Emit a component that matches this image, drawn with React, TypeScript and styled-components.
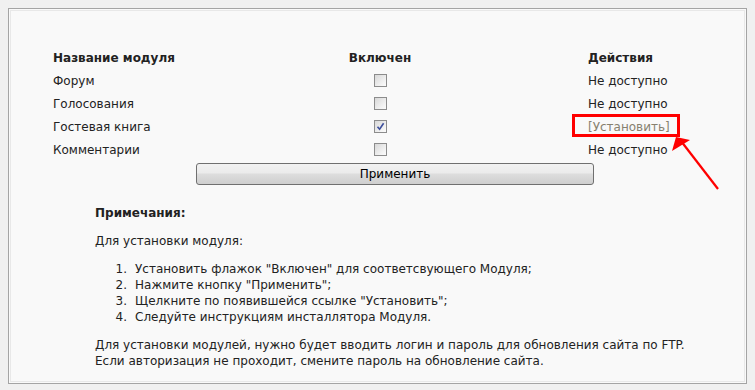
import React from "react";
import styled, { createGlobalStyle } from "styled-components";

const Global = createGlobalStyle`
  html, body { margin: 0; padding: 0; background: #f0f0f0; }
  body { padding: 8px; font-family: "DejaVu Sans", Verdana, sans-serif; font-size: 12px; color: #222; }
`;

const Panel = styled.div`
  position: relative;
  box-sizing: border-box;
  width: 739px;
  height: 376px;
  border: 1px solid #a4a4a4;
  background: #f9f9f9;
  box-shadow: inset 0 0 0 1px #f9f9f9, inset 0 0 0 2px #e8e8e8;
  padding: 38px 0 0 44px;
`;

const Table = styled.div`
  display: grid;
  grid-template-columns: 200px 254px 81px 150px;
`;

const HeadCell = styled.div<{ $align?: string; $col?: number }>`
  font-weight: bold;
  height: 22px;
  line-height: 22px;
  text-align: ${(p) => p.$align || "left"};
  grid-column: ${(p) => p.$col || "auto"};
`;

const Cell = styled.div<{ $center?: boolean; $col?: number }>`
  height: 23px;
  display: flex;
  align-items: center;
  grid-column: ${(p) => p.$col || "auto"};
  justify-content: ${(p) => (p.$center ? "center" : "flex-start")};
`;

const Box = styled.span`
  box-sizing: border-box;
  width: 13px;
  height: 13px;
  border: 1px solid #8c8c8c;
  background: linear-gradient(135deg, #d8d8d8 0%, #f4f4f4 75%, #fbfbfb 100%);
  display: inline-flex;
  align-items: center;
  justify-content: center;
`;

const Install = styled.span`
  color: #87816f;
`;

const ButtonRow = styled.div`
  grid-column: 1 / 5;
  display: flex;
  padding: 2px 0 0 143px;
`;

const Button = styled.button`
  box-sizing: border-box;
  width: 398px;
  height: 22px;
  border: 1px solid #707070;
  border-radius: 3px;
  background: linear-gradient(#f2f2f2 0%, #ebebeb 45%, #dddddd 50%, #cfcfcf 100%);
  font-family: "DejaVu Sans", Verdana, sans-serif;
  font-size: 12px;
  color: #000;
  padding: 0;
`;

const Notes = styled.div`
  padding: 20px 0 0 42px;
  line-height: 16px;
`;

const NotesTitle = styled.div`
  font-weight: bold;
`;

const P = styled.p`
  margin: 12px 0 0;
`;

const List = styled.ol`
  margin: 12px 0 0;
  padding-left: 40px;
  list-style: none;
  counter-reset: step;
`;

const Item = styled.li`
  counter-increment: step;
  position: relative;
  &::before {
    content: counter(step) ".";
    position: absolute;
    right: calc(100% + 8px);
  }
`;

const Highlight = styled.div`
  position: absolute;
  left: 563px;
  top: 105px;
  width: 108px;
  height: 23px;
  box-sizing: border-box;
  border: 3px solid #ff0000;
  pointer-events: none;
`;

const Arrow = styled.svg`
  position: absolute;
  left: 650px;
  top: 120px;
  overflow: visible;
`;

const rows = [
  { name: "Форум", checked: false, install: false },
  { name: "Голосования", checked: false, install: false },
  { name: "Гостевая книга", checked: true, install: true },
  { name: "Комментарии", checked: false, install: false },
];

export default function App() {
  return (
    <>
      <Global />
      <Panel>
        <Table>
          <HeadCell>Название модуля</HeadCell>
          <HeadCell $align="center">Включен</HeadCell>
          <HeadCell $col={4}>Действия</HeadCell>
          {rows.map((r) => (
            <React.Fragment key={r.name}>
              <Cell>{r.name}</Cell>
              <Cell $center>
                <Box>
                  {r.checked && (
                    <svg width="9" height="9" viewBox="0 0 9 9">
                      <path d="M1.5 4.8 L3.6 7.2 L7.6 1.2" fill="none" stroke="#3d4f9c" strokeWidth="1.6" />
                    </svg>
                  )}
                </Box>
              </Cell>
              <Cell $col={4}>{r.install ? <Install>[Установить]</Install> : "Не доступно"}</Cell>
            </React.Fragment>
          ))}
          <ButtonRow>
            <Button>Применить</Button>
          </ButtonRow>
        </Table>
        <Notes>
          <NotesTitle>Примечания:</NotesTitle>
          <P>Для установки модуля:</P>
          <List>
            <Item>Установить флажок "Включен" для соответсвующего Модуля;</Item>
            <Item>Нажмите кнопку "Применить";</Item>
            <Item>Щелкните по появившейся ссылке "Установить";</Item>
            <Item>Следуйте инструкциям инсталлятора Модуля.</Item>
          </List>
          <P>
            Для установки модулей, нужно будет вводить логин и пароль для обновления сайта по FTP.
            <br />
            Если авторизация не проходит, смените пароль на обновление сайта.
          </P>
        </Notes>
        <Highlight />
        <Arrow width="70" height="70" viewBox="0 0 70 70">
          <line x1="59" y1="60" x2="22" y2="12" stroke="#ff0000" strokeWidth="2.2" />
          <polygon points="13,22 17,8 31,11" fill="#ff0000" />
        </Arrow>
      </Panel>
    </>
  );
}
